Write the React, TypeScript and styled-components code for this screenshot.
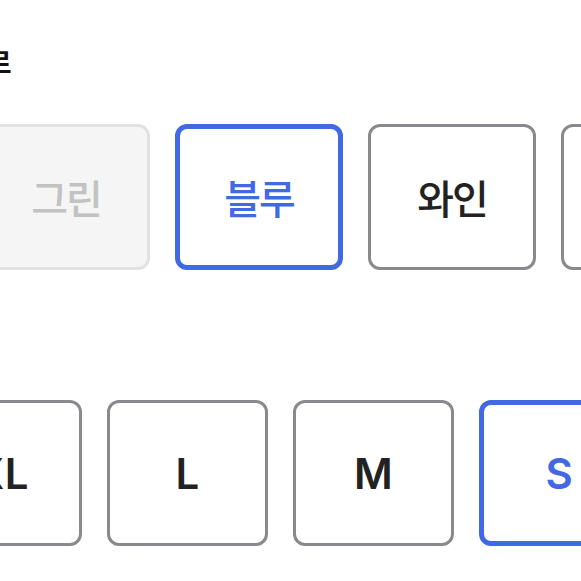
import React, { useState } from 'react';
import styled, { createGlobalStyle, css } from 'styled-components';

const GlobalStyle = createGlobalStyle`
  html, body {
    margin: 0;
    padding: 0;
    background: #ffffff;
    overflow: hidden;
  }
  body {
    font-family: Inter, 'Noto Sans CJK KR', sans-serif;
    color: #222222;
  }
`;

const Page = styled.div`
  display: flex;
  flex-direction: column;
  gap: 54px;
  padding-top: 48px;
  width: 581px;
  height: 581px;
  box-sizing: border-box;
  overflow: hidden;
`;

const Section = styled.section`
  display: flex;
  flex-direction: column;
  gap: 49px;
`;

const Label = styled.h3<{ $offset: number }>`
  margin: 0 0 0 ${(p) => p.$offset}px;
  font-family: 'Noto Sans CJK KR', sans-serif;
  font-size: 27px;
  line-height: 27px;
  font-weight: 700;
  color: #111111;
  white-space: nowrap;
`;

const Row = styled.div<{ $offset: number }>`
  display: flex;
  gap: 25px;
  margin-left: ${(p) => p.$offset}px;
`;

type OptionState = 'default' | 'selected' | 'disabled';

const OptionButton = styled.button<{ $state: OptionState; $width: number; $korean?: boolean }>`
  flex: none;
  display: flex;
  align-items: center;
  justify-content: center;
  width: ${(p) => p.$width}px;
  height: 146px;
  box-sizing: border-box;
  padding: 0;
  border-radius: 12px;
  border: 3px solid #8a8a8e;
  background: #ffffff;
  color: #222222;
  font-family: Inter, 'Noto Sans CJK KR', sans-serif;
  font-size: ${(p) => (p.$korean ? 40 : 42)}px;
  font-weight: ${(p) => (p.$korean ? 500 : 600)};
  letter-spacing: ${(p) => (p.$korean ? '-2px' : '0.5px')};
  cursor: pointer;

  ${(p) =>
    p.$state === 'selected' &&
    css`
      border: 5px solid #4169e1;
      color: #4169e1;
    `}

  ${(p) =>
    p.$state === 'disabled' &&
    css`
      border: 3px solid #e2e2e2;
      background: #f5f5f5;
      color: #c2c2c2;
      cursor: default;
    `}
`;

const colors = [
  { name: '그린', soldOut: true },
  { name: '블루', soldOut: false },
  { name: '와인', soldOut: false },
  { name: '블랙', soldOut: false },
];

const sizes = ['XL', 'L', 'M', 'S'];

export default function App() {
  const [color, setColor] = useState('블루');
  const [size, setSize] = useState('S');

  return (
    <Page>
      <GlobalStyle />
      <Section>
        <Label $offset={-94}>색상 고르</Label>
        <Row $offset={-18}>
          {colors.map((c) => (
            <OptionButton
              key={c.name}
              $korean
              $width={168}
              $state={c.soldOut ? 'disabled' : color === c.name ? 'selected' : 'default'}
              disabled={c.soldOut}
              onClick={() => setColor(c.name)}
            >
              {c.name}
            </OptionButton>
          ))}
        </Row>
      </Section>
      <Section>
        <Label $offset={-140}>사이즈</Label>
        <Row $offset={-79}>
          {sizes.map((s) => (
            <OptionButton
              key={s}
              $width={161}
              $state={size === s ? 'selected' : 'default'}
              onClick={() => setSize(s)}
            >
              {s}
            </OptionButton>
          ))}
        </Row>
      </Section>
    </Page>
  );
}
